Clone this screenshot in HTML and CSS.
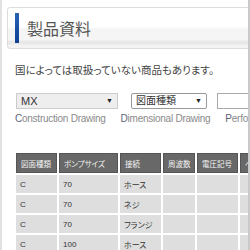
FILE: index.html
```html
<!DOCTYPE html>
<html lang="ja">
<head>
    <meta charset="UTF-8">
    <meta name="viewport" content="width=device-width, initial-scale=1.0">
    <title>製品資料</title>
    <link rel="stylesheet" href="styles.css">
</head>
<body>
    <div class="frame">
        <div class="page-head">
            <span class="bar"></span>
            <h1>製品資料</h1>
        </div>

        <p class="note">国によっては取扱っていない商品もあります。</p>

        <div class="filters">
            <div class="pick pick-series">MX<span class="arrow">▼</span></div>
            <div class="pick pick-type">図面種類<span class="arrow">▼</span></div>
            <div class="pick pick-text"></div>
        </div>
        <div class="legend">
            <span><b>C</b>onstruction Drawing</span>
            <span><b>D</b>imensional Drawing</span>
            <span><b>P</b>erformance Curve</span>
        </div>

        <table class="docs">
            <thead>
                <tr>
                    <th class="c1">図面種類</th>
                    <th class="c2">ポンプサイズ</th>
                    <th class="c3">接続</th>
                    <th class="c4">周波数</th>
                    <th class="c5">電圧記号</th>
                    <th class="c6">ページ</th>
                </tr>
            </thead>
            <tbody>
                <tr><td>C</td><td>70</td><td>ホース</td><td></td><td></td><td></td></tr>
                <tr><td>C</td><td>70</td><td>ネジ</td><td></td><td></td><td></td></tr>
                <tr><td>C</td><td>70</td><td>フランジ</td><td></td><td></td><td></td></tr>
                <tr><td>C</td><td>100</td><td>ホース</td><td></td><td></td><td></td></tr>
            </tbody>
        </table>
    </div>
</body>
</html>
```

FILE: styles.css
```css
body {
    margin: 0;
    background: #fff;
    font-family: "Liberation Sans", "Noto Sans CJK JP", sans-serif;
    font-feature-settings: "palt";
    color: #444;
}
.frame {
    width: 250px;
    height: 250px;
    border-left: 2px solid #e2e2e2;
    border-right: 2px solid #c9c9c9;
    padding: 7px 0 0 5px;
    box-sizing: border-box;
    overflow: hidden;
}
.page-head {
    display: flex;
    align-items: center;
    height: 40px;
    width: 260px;
    padding-left: 7px;
    border: 1px solid #ddd;
    border-radius: 3px;
    background: linear-gradient(#fff 0, #fff 19px, #f5f5f5 21px, #f5f5f5 32px, #e8e8e8 33px, #e8e8e8 36px, #f3f3f3 37px);
}
.bar {
    width: 4px;
    height: 30px;
    background: linear-gradient(#2a62b8, #0f3f92);
}
.page-head h1 {
    margin: 0 0 0 8px;
    font-size: 16px;
    font-weight: normal;
    color: #555;
}
.note {
    margin: 14px 0 0 8px;
    font-size: 10.5px;
    line-height: 14px;
    color: #444;
}
.filters {
    display: flex;
    margin: 16px 0 0 9px;
    gap: 13px;
}
.pick {
    position: relative;
    flex-shrink: 0;
    box-sizing: border-box;
    height: 16px;
    border: 1px solid #bbb;
    font-size: 10px;
    line-height: 14px;
    padding-left: 4px;
    color: #333;
}
.pick-series {
    width: 102px;
    background: #eee;
    border-color: #ccc;
    font-size: 11px;
}
.pick-type {
    width: 76px;
    border-color: #999;
    border-radius: 2px;
}
.pick-text {
    width: 60px;
    margin-left: -3px;
    border-color: #aaa;
}
.arrow {
    position: absolute;
    right: 4px;
    top: 0;
    font-size: 7px;
    color: #222;
}
.legend {
    display: flex;
    gap: 15px;
    margin: 4px 0 0 8px;
    font-size: 10px;
    letter-spacing: -0.25px;
    line-height: 12px;
    color: #8a8a8a;
    white-space: nowrap;
}
.legend b {
    font-weight: normal;
    color: #5a6578;
}
.docs {
    margin: 26px 0 0 7px;
    border-collapse: separate;
    border-spacing: 2px;
    font-size: 8px;
    table-layout: fixed;
    width: 278px;
}
.docs th,
.docs td {
    box-sizing: border-box;
    padding: 0 0 0 4px;
    text-align: left;
    white-space: nowrap;
    overflow: hidden;
}
.docs th {
    height: 20px;
    background: #686868;
    color: #f4f4f4;
    font-size: 7.5px;
    font-weight: normal;
    border: 1px solid #555;
}
.docs td {
    height: 18px;
    background: #dedede;
    color: #333;
}
.c1 { width: 41px; }
.c2 { width: 59px; }
.c3 { width: 41px; }
.c4 { width: 32px; }
.c5 { width: 41px; }
.c6 { width: 50px; }
```
